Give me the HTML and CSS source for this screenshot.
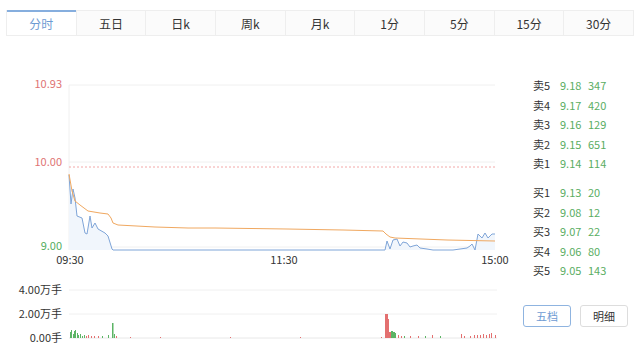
FILE: index.html
```html
<!DOCTYPE html>
<html lang="zh">
<head>
  <meta charset="UTF-8">
  <meta name="viewport" content="width=device-width, initial-scale=1.0">
  <title>分时</title>
  <link rel="stylesheet" href="styles.css">
</head>
<body>
  <div class="tabs">
    <div class="tab active">分时</div>
    <div class="tab">五日</div>
    <div class="tab">日k</div>
    <div class="tab">周k</div>
    <div class="tab">月k</div>
    <div class="tab">1分</div>
    <div class="tab">5分</div>
    <div class="tab">15分</div>
    <div class="tab">30分</div>
  </div>

  <div class="main">
    <svg class="chart" width="515" height="325" viewBox="0 35 515 325">
      <!-- price grid -->
      <line x1="69" y1="84" x2="495" y2="84" class="grid"/>
      <line x1="69" y1="161" x2="495" y2="161" class="grid"/>
      <line x1="69" y1="84" x2="69" y2="249" class="grid"/>
      <line x1="69" y1="246" x2="495" y2="246" class="grid"/>
      <line x1="69" y1="166" x2="495" y2="166" class="prev"/>

      <text x="62" y="87" class="lbl up">10.93</text>
      <text x="62" y="165" class="lbl up">10.00</text>
      <text x="62" y="249" class="lbl down">9.00</text>

      <polygon class="area" points="69,174 71,203 73,188 75,197 77,215 82,217 85,232 87,233 90,215 92,227 95,222 98,228 105,232 108,235 112,248 113,249 385,249 387,240 390,248 393,239 397,238 400,245 403,241 407,242 410,246 413,245 417,244 420,247 427,248 433,249 453,249 460,248 467,247 470,245 472,243 475,249 478,233 482,237 485,232 488,237 492,233 495,233 495,249 69,249"/>
      <polyline class="price" points="69,174 71,203 73,188 75,197 77,215 82,217 85,232 87,233 90,215 92,227 95,222 98,228 105,232 108,235 112,248 113,249 385,249 387,240 390,248 393,239 397,238 400,245 403,241 407,242 410,246 413,245 417,244 420,247 427,248 433,249 453,249 460,248 467,247 470,245 472,243 475,249 478,233 482,237 485,232 488,237 492,233 495,233"/>
      <polyline class="avg" points="69,173 72,190 75,200 80,204 88,210 100,212 108,213 111,217 113,222 118,224 155,226 188,227 215,227 287,228 343,229 383,230 386,233 390,236 395,237 447,239 495,240"/>

      <text x="70" y="263" class="time">09:30</text>
      <text x="284" y="263" class="time">11:30</text>
      <text x="495" y="263" class="time">15:00</text>

      <!-- volume -->
      <line x1="69" y1="289" x2="497" y2="289" class="grid"/>
      <line x1="69" y1="313" x2="497" y2="313" class="grid"/>
      <line x1="69" y1="337" x2="497" y2="337" class="base"/>
      <text x="62" y="293" class="lbl">4.00万手</text>
      <text x="62" y="317" class="lbl">2.00万手</text>
      <text x="62" y="341" class="lbl">0.00手</text>

      <g class="vol-g">
        <rect x="70" y="331" width="1" height="6"/>
        <rect x="71" y="329" width="1" height="8"/>
        <rect x="73" y="333" width="1" height="4"/>
        <rect x="74" y="330" width="1" height="7"/>
        <rect x="75" y="329" width="1" height="8"/>
        <rect x="77" y="332" width="1" height="5"/>
        <rect x="78" y="334" width="1" height="3"/>
        <rect x="80" y="333" width="1" height="4"/>
        <rect x="82" y="335" width="1" height="2"/>
        <rect x="84" y="334" width="1" height="3"/>
        <rect x="102" y="335" width="1" height="2"/>
        <rect x="108" y="334" width="1" height="3"/>
        <rect x="112" y="322" width="1.5" height="15"/>
        <rect x="114" y="333" width="1" height="4"/>
        <rect x="391" y="330" width="2" height="7"/>
        <rect x="393" y="331" width="2" height="6"/>
        <rect x="395" y="332" width="1" height="5"/>
        <rect x="404" y="335" width="1" height="2"/>
        <rect x="425" y="335" width="1" height="2"/>
        <rect x="440" y="335" width="1" height="2"/>
      </g>
      <g class="vol-r">
        <rect x="86" y="335" width="1" height="2"/>
        <rect x="88" y="334" width="1" height="3"/>
        <rect x="91" y="335" width="1" height="2"/>
        <rect x="94" y="335" width="1" height="2"/>
        <rect x="98" y="335" width="1" height="2"/>
        <rect x="116" y="335" width="1" height="2"/>
        <rect x="130" y="336" width="1" height="1"/>
        <rect x="160" y="336" width="1" height="1"/>
        <rect x="230" y="336" width="1" height="1"/>
        <rect x="300" y="336" width="1" height="1"/>
        <rect x="381" y="336" width="1" height="1"/>
        <rect x="385" y="313" width="3" height="24"/>
        <rect x="388" y="318" width="1" height="19"/>
        <rect x="389" y="331" width="2" height="6"/>
        <rect x="398" y="334" width="1" height="3"/>
        <rect x="401" y="335" width="1" height="2"/>
        <rect x="410" y="335" width="1" height="2"/>
        <rect x="418" y="335" width="1" height="2"/>
        <rect x="432" y="334" width="1" height="3"/>
        <rect x="461" y="333" width="1" height="4"/>
        <rect x="464" y="335" width="1" height="2"/>
        <rect x="470" y="335" width="1" height="2"/>
        <rect x="474" y="334" width="1" height="3"/>
        <rect x="477" y="334" width="1" height="3"/>
        <rect x="480" y="334" width="1" height="3"/>
        <rect x="483" y="333" width="1" height="4"/>
        <rect x="486" y="334" width="1" height="3"/>
        <rect x="489" y="333" width="1" height="4"/>
        <rect x="491" y="332" width="1" height="5"/>
        <rect x="495" y="334" width="1" height="3"/>
      </g>
    </svg>

    <div class="side">
      <div class="book">
        <div class="row"><span class="name">卖5</span><span class="num">9.18</span><span class="num">347</span></div>
        <div class="row"><span class="name">卖4</span><span class="num">9.17</span><span class="num">420</span></div>
        <div class="row"><span class="name">卖3</span><span class="num">9.16</span><span class="num">129</span></div>
        <div class="row"><span class="name">卖2</span><span class="num">9.15</span><span class="num">651</span></div>
        <div class="row"><span class="name">卖1</span><span class="num">9.14</span><span class="num">114</span></div>
      </div>
      <div class="book buy">
        <div class="row"><span class="name">买1</span><span class="num">9.13</span><span class="num">20</span></div>
        <div class="row"><span class="name">买2</span><span class="num">9.08</span><span class="num">12</span></div>
        <div class="row"><span class="name">买3</span><span class="num">9.07</span><span class="num">22</span></div>
        <div class="row"><span class="name">买4</span><span class="num">9.06</span><span class="num">80</span></div>
        <div class="row"><span class="name">买5</span><span class="num">9.05</span><span class="num">143</span></div>
      </div>
      <div class="btns">
        <button class="btn active">五档</button>
        <button class="btn">明细</button>
      </div>
    </div>
  </div>
</body>
</html>
```

FILE: styles.css
```css
body {
  margin: 0;
  padding: 0;
  background: #fff;
  font-family: "Noto Sans CJK SC", "DejaVu Sans", sans-serif;
  color: #333;
}

.tabs {
  display: flex;
  margin: 10px 6px 0;
  border: 1px solid #eee;
  border-top: none;
  background: #fbfbfb;
}

.tab {
  flex: 1;
  height: 23px;
  line-height: 23px;
  text-align: center;
  font-size: 12px;
  border-top: 1px solid #eee;
  border-left: 1px solid #eee;
  padding-top: 1px;
}

.tab:first-child {
  border-left: none;
}

.tab.active {
  color: #6e9bd3;
  background: #fff;
  border-top: 2px solid #86aede;
  padding-top: 0;
}

.main {
  display: flex;
}

.chart {
  display: block;
  flex: none;
}

.chart .grid {
  stroke: #f0f0f0;
  stroke-width: 1;
}

.chart .base {
  stroke: #e8e8e8;
  stroke-width: 1;
}

.chart .prev {
  stroke: #f2a8a8;
  stroke-width: 1;
  stroke-dasharray: 2 2;
}

.chart .lbl {
  font-size: 11px;
  text-anchor: end;
  fill: #333;
}

.chart .up {
  fill: #e07474;
}

.chart .down {
  fill: #55ad5f;
}

.chart .time {
  font-size: 11px;
  text-anchor: middle;
  fill: #333;
}

.chart .area {
  fill: #f1f6fc;
}

.chart .price {
  fill: none;
  stroke: #7fa5d8;
  stroke-width: 1;
}

.chart .avg {
  fill: none;
  stroke: #f0a860;
  stroke-width: 1;
}

.vol-g rect {
  fill: #5cb465;
}

.vol-r rect {
  fill: #e37070;
}

.side {
  flex: 1;
  padding-left: 8px;
}

.book {
  margin-top: 40px;
  padding-left: 10px;
}

.book.buy {
  margin-top: 9px;
}

.row {
  display: flex;
  height: 19.6px;
  line-height: 19.6px;
  font-size: 11px;
}

.name {
  width: 27px;
}

.num {
  width: 28px;
  color: #5aad62;
}

.btns {
  display: flex;
  gap: 9px;
  margin-top: 24px;
}

.btn {
  width: 48px;
  height: 22px;
  padding: 0;
  font-family: inherit;
  font-size: 11px;
  color: #333;
  background: #fff;
  border: 1px solid #ddd;
  border-radius: 3px;
  cursor: pointer;
}

.btn.active {
  color: #6e9bd3;
  border-color: #8fb4e0;
}
```
